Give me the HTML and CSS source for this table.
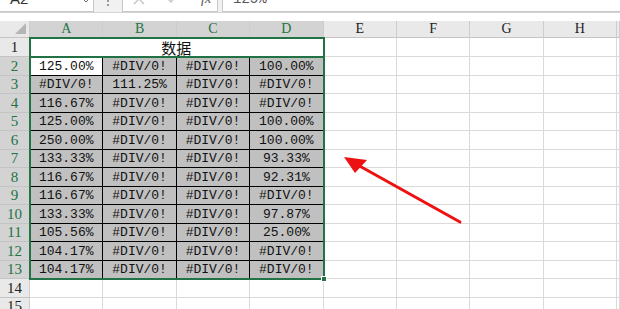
FILE: index.html
```html
<!DOCTYPE html>
<html lang="zh">
<head>
<meta charset="utf-8">
<link rel="stylesheet" href="styles.css">
</head>
<body>
<div class="app">
  <div class="toolbar">
    <div class="namebox"><span class="nb-text">A2</span>
      <svg class="caret" width="8" height="5" viewBox="0 0 8 5"><path d="M1 0 L4 3 L7 0" fill="none" stroke="#666" stroke-width="1"/></svg>
    </div>
    <div class="dots"><span></span><span></span></div>
    <div class="fbtns">
      <svg class="ico" width="12" height="12" viewBox="0 0 12 12"><path d="M1 1 L11 11 M11 1 L1 11" stroke="#c4c4c4" stroke-width="1.4" fill="none"/></svg>
      <svg class="ico" width="12" height="12" viewBox="0 0 12 12"><path d="M1 5 L5 9 L11 1" stroke="#c4c4c4" stroke-width="1.4" fill="none"/></svg>
      <span class="fx">fx</span>
    </div>
    <div class="formula"><span class="f-text">125%</span></div>
  </div>
  <div class="band"></div>
  <div class="sheet">
    <div class="hd corner"><span class="tri"></span></div>
    <div class="hd col sel">A</div><div class="hd col sel">B</div><div class="hd col sel">C</div><div class="hd col sel">D</div>
    <div class="hd col">E</div><div class="hd col">F</div><div class="hd col">G</div><div class="hd col">H</div><div class="hd col"></div>

    <div class="hd rowh">1</div><div class="c merged">数据</div><div class="c"></div><div class="c"></div><div class="c"></div><div class="c"></div><div class="c"></div>

    <div class="hd rowh sel">2</div><div class="c d active">125.00%</div><div class="c d">#DIV/0!</div><div class="c d">#DIV/0!</div><div class="c d">100.00%</div><div class="c"></div><div class="c"></div><div class="c"></div><div class="c"></div><div class="c"></div>
    <div class="hd rowh sel">3</div><div class="c d">#DIV/0!</div><div class="c d">111.25%</div><div class="c d">#DIV/0!</div><div class="c d">#DIV/0!</div><div class="c"></div><div class="c"></div><div class="c"></div><div class="c"></div><div class="c"></div>
    <div class="hd rowh sel">4</div><div class="c d">116.67%</div><div class="c d">#DIV/0!</div><div class="c d">#DIV/0!</div><div class="c d">#DIV/0!</div><div class="c"></div><div class="c"></div><div class="c"></div><div class="c"></div><div class="c"></div>
    <div class="hd rowh sel">5</div><div class="c d">125.00%</div><div class="c d">#DIV/0!</div><div class="c d">#DIV/0!</div><div class="c d">100.00%</div><div class="c"></div><div class="c"></div><div class="c"></div><div class="c"></div><div class="c"></div>
    <div class="hd rowh sel">6</div><div class="c d">250.00%</div><div class="c d">#DIV/0!</div><div class="c d">#DIV/0!</div><div class="c d">100.00%</div><div class="c"></div><div class="c"></div><div class="c"></div><div class="c"></div><div class="c"></div>
    <div class="hd rowh sel">7</div><div class="c d">133.33%</div><div class="c d">#DIV/0!</div><div class="c d">#DIV/0!</div><div class="c d">93.33%</div><div class="c"></div><div class="c"></div><div class="c"></div><div class="c"></div><div class="c"></div>
    <div class="hd rowh sel">8</div><div class="c d">116.67%</div><div class="c d">#DIV/0!</div><div class="c d">#DIV/0!</div><div class="c d">92.31%</div><div class="c"></div><div class="c"></div><div class="c"></div><div class="c"></div><div class="c"></div>
    <div class="hd rowh sel">9</div><div class="c d">116.67%</div><div class="c d">#DIV/0!</div><div class="c d">#DIV/0!</div><div class="c d">#DIV/0!</div><div class="c"></div><div class="c"></div><div class="c"></div><div class="c"></div><div class="c"></div>
    <div class="hd rowh sel">10</div><div class="c d">133.33%</div><div class="c d">#DIV/0!</div><div class="c d">#DIV/0!</div><div class="c d">97.87%</div><div class="c"></div><div class="c"></div><div class="c"></div><div class="c"></div><div class="c"></div>
    <div class="hd rowh sel">11</div><div class="c d">105.56%</div><div class="c d">#DIV/0!</div><div class="c d">#DIV/0!</div><div class="c d">25.00%</div><div class="c"></div><div class="c"></div><div class="c"></div><div class="c"></div><div class="c"></div>
    <div class="hd rowh sel">12</div><div class="c d">104.17%</div><div class="c d">#DIV/0!</div><div class="c d">#DIV/0!</div><div class="c d">#DIV/0!</div><div class="c"></div><div class="c"></div><div class="c"></div><div class="c"></div><div class="c"></div>
    <div class="hd rowh sel">13</div><div class="c d">104.17%</div><div class="c d">#DIV/0!</div><div class="c d">#DIV/0!</div><div class="c d">#DIV/0!</div><div class="c"></div><div class="c"></div><div class="c"></div><div class="c"></div><div class="c"></div>
    <div class="hd rowh">14</div><div class="c"></div><div class="c"></div><div class="c"></div><div class="c"></div><div class="c"></div><div class="c"></div><div class="c"></div><div class="c"></div><div class="c"></div>
    <div class="hd rowh">15</div><div class="c"></div><div class="c"></div><div class="c"></div><div class="c"></div><div class="c"></div><div class="c"></div><div class="c"></div><div class="c"></div><div class="c"></div>

    <div class="selbox sel-title"></div>
    <div class="selbox sel-data"><span class="handle"></span></div>
  </div>
  <svg class="arrow" width="620" height="309" viewBox="0 0 620 309">
    <line x1="460" y1="222" x2="356" y2="164" stroke="#ee1111" stroke-width="3" stroke-linecap="round"/>
    <polygon points="344,157 367,160 355,173" fill="#ee1111"/>
  </svg>
</div>
</body>
</html>
```

FILE: styles.css
```css
* { box-sizing: border-box; }
html, body { margin: 0; padding: 0; background: #fff; }
body { width: 620px; height: 309px; overflow: hidden; }
.app { position: relative; width: 620px; height: 309px; overflow: hidden; }

.toolbar {
  height: 13px;
  display: flex;
  align-items: flex-end;
  overflow: hidden;
  background: #f1f1f1;
  border-bottom: 1px solid #d4d4d4;
}
.namebox {
  width: 94px; height: 26px; flex: none;
  background: #fff;
  border-right: 1px solid #c8c8c8;
  border-bottom: 1px solid #c8c8c8;
  display: flex; align-items: center;
  padding-left: 10px;
  font-family: "Liberation Sans", Arial, sans-serif;
  font-size: 15px; color: #333;
  position: relative;
}
.caret { position: absolute; left: 82px; top: 13px; }
.dots {
  width: 28px; flex: none; height: 26px;
  display: flex; flex-direction: column; align-items: center; justify-content: flex-end;
  gap: 2px; padding-bottom: 6px;
}
.dots span { width: 2px; height: 2px; background: #9a9a9a; display: block; }
.fbtns {
  width: 96px; height: 26px; flex: none;
  background: #fff;
  border: 1px solid #c8c8c8;
  display: flex; align-items: center;
  padding-left: 10px; gap: 21px;
  margin-right: 4px;
}
.fbtns .ico { flex: none; margin-top: -1px; }
.fx {
  font-family: "Liberation Serif", serif; font-style: italic;
  font-size: 14px; color: #555; margin-left: 2px;
}
.formula {
  flex: 1; height: 26px;
  background: #fff;
  border-left: 1px solid #c8c8c8;
  border-bottom: 1px solid #c8c8c8;
  display: flex; align-items: center;
  padding-left: 10px;
  font-family: "Liberation Mono", monospace;
  font-size: 14px; color: #555;
}
.band { height: 8px; background: #fff; }

.sheet {
  position: relative;
  display: grid;
  grid-template-columns: 30px repeat(8, 73.4px) 1fr;
  grid-template-rows: 17px 19px repeat(12, 18.5px) 18.5px 18.5px;
  font-family: "Liberation Mono", "Noto Sans CJK SC", monospace;
  font-size: 13px;
  color: #111;
}
.hd {
  background: #e9e9e9;
  border-right: 1px solid #cdcdcd;
  border-bottom: 1px solid #c4c4c4;
  display: flex; align-items: center; justify-content: center;
  color: #222;
  font-family: "Liberation Serif", "Times New Roman", serif;
  font-size: 14px;
  line-height: 1;
}
.hd.sel { background: #d3d3d3; color: #217346; }
.hd.rowh { font-size: 15px; padding-top: 1px; }
.corner { position: relative; background: #e9e9e9; }
.tri {
  position: absolute; right: 3px; bottom: 3px;
  width: 0; height: 0;
  border-left: 11px solid transparent;
  border-bottom: 11px solid #b5b5b5;
}
.c {
  border-right: 1px solid #dadada;
  border-bottom: 1px solid #dadada;
  display: flex; align-items: center; justify-content: center;
  white-space: nowrap;
  line-height: 1;
  background: #fff;
}
.merged {
  grid-column: span 4;
  font-family: "Noto Sans CJK SC", sans-serif;
  font-size: 15px;
  border-right-color: #000;
}
.d {
  background: #c0c0c0;
  border-right: 1px solid #000;
  border-bottom: 1px solid #000;
  padding-top: 1px;
}
.d.active { background: #fff; }

.selbox {
  position: absolute;
  border: 2px solid #217346;
  pointer-events: none;
  margin: -1px 0 0 -1px;
}
.sel-title { grid-column: 2 / 6; grid-row: 2 / 3; }
.sel-data { grid-column: 2 / 6; grid-row: 3 / 15; }
.sel-title, .sel-data { top: 0; left: 0; right: -1px; bottom: -1px; }
.handle {
  position: absolute; right: -4px; bottom: -4px;
  width: 6px; height: 6px;
  background: #217346; border: 1px solid #fff;
}
.arrow { position: absolute; left: 0; top: 0; pointer-events: none; }
```
